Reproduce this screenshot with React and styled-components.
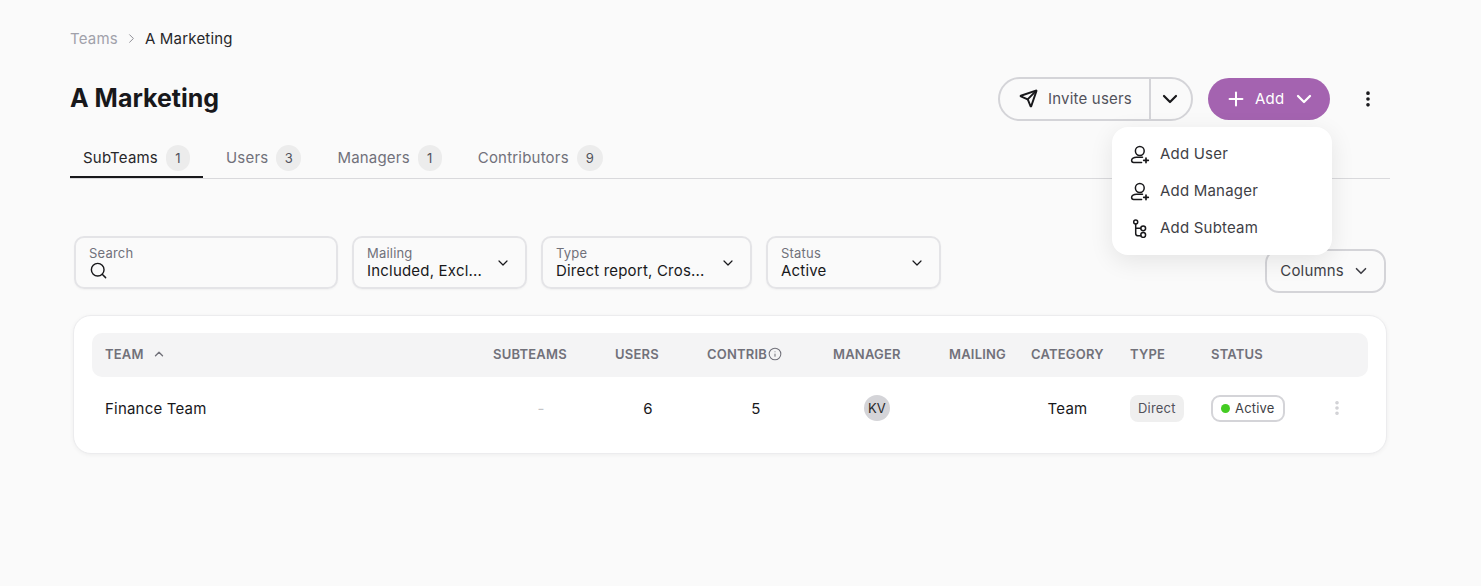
import React from "react";
import styled, { createGlobalStyle } from "styled-components";
import {
  ChevronDown,
  ChevronRight,
  ChevronUp,
  EllipsisVertical,
  Info,
  Plus,
  Search,
  Send,
} from "lucide-react";

const GlobalStyle = createGlobalStyle`
  html, body {
    margin: 0;
    background: #fafafa;
  }
  body {
    font-family: "Inter", "Liberation Sans", sans-serif;
    font-size: 15px;
    letter-spacing: 0.2px;
    color: #18181b;
  }
  * {
    box-sizing: border-box;
  }
`;

const Page = styled.div`
  width: 1481px;
  height: 586px;
  padding: 28px 91px 0 70px;
  overflow: hidden;
`;

const Breadcrumb = styled.nav`
  display: flex;
  align-items: center;
  gap: 6px;
  height: 21px;
  line-height: 21px;
  color: #a1a1aa;
  svg {
    color: #8f8f96;
  }
`;
const Current = styled.span`
  color: #27272a;
`;

const HeaderRow = styled.div`
  display: flex;
  align-items: center;
  justify-content: space-between;
  height: 44px;
  margin-top: 28px;
`;
const Title = styled.h1`
  margin: 0 0 2px;
  font-size: 25px;
  font-weight: 700;
  letter-spacing: 0;
  color: #18181b;
`;
const Actions = styled.div`
  display: flex;
  align-items: center;
`;
const InviteGroup = styled.div`
  display: flex;
  height: 44px;
  width: 195px;
  border: 2px solid #d4d4d8;
  border-radius: 22px;
`;
const InviteMain = styled.div`
  display: flex;
  align-items: center;
  gap: 10px;
  width: 151px;
  padding: 0 0 1px 19px;
  border-right: 2px solid #d4d4d8;
  color: #52525b;
  svg {
    color: #18181b;
  }
`;
const InviteCaret = styled.div`
  flex: 1;
  display: flex;
  align-items: center;
  justify-content: center;
  padding-right: 2px;
`;
const AddWrap = styled.div`
  position: relative;
  margin-left: 15px;
`;
const AddButton = styled.div`
  display: flex;
  align-items: center;
  gap: 8px;
  width: 122px;
  height: 42px;
  padding: 0 0 1px 17px;
  border-radius: 21px;
  background: #a463b0;
  color: #fff;
`;
const Kebab = styled.div`
  display: flex;
  margin-left: 28px;
  margin-right: 12px;
`;

const Menu = styled.div`
  position: absolute;
  top: 49px;
  right: -2px;
  z-index: 5;
  width: 220px;
  height: 128px;
  padding: 8px 18px;
  background: #fff;
  border-radius: 16px;
  box-shadow: 0 6px 24px rgba(0, 0, 0, 0.09);
`;
const MenuItem = styled.div`
  display: flex;
  align-items: center;
  gap: 10px;
  height: 37px;
  color: #3f3f46;
`;

const Tabs = styled.div`
  display: flex;
  gap: 10px;
  height: 42px;
  margin-top: 16px;
  border-bottom: 1px solid #d9d9dc;
`;
const Tab = styled.div`
  display: flex;
  align-items: center;
  gap: 8px;
  height: 41px;
  padding: 0 13px;
  border-bottom: ${(p) => (p.$active ? "2px solid #18181b" : "none")};
  padding-top: ${(p) => (p.$active ? "2px" : "0")};
  color: ${(p) => (p.$active ? "#27272a" : "#71717a")};
`;
const Count = styled.span`
  display: flex;
  align-items: center;
  justify-content: center;
  width: ${(p) => p.$w || 24}px;
  height: 26px;
  border-radius: 13px;
  background: #ececec;
  color: #52525b;
  font-size: 13px;
`;

const FilterRow = styled.div`
  display: flex;
  align-items: flex-start;
  gap: 14px;
  margin-top: 57px;
  padding: 0 4px;
`;
const Field = styled.div`
  display: flex;
  align-items: center;
  justify-content: space-between;
  width: ${(p) => p.$w}px;
  height: 53px;
  padding: 0 14px 0 13px;
  border: 2px solid #e4e4e7;
  border-radius: 10px;
  box-shadow: 0 1px 2px rgba(0, 0, 0, 0.04);
`;
const FieldText = styled.div`
  display: flex;
  flex-direction: column;
`;
const FieldLabel = styled.span`
  font-size: 13px;
  line-height: 16px;
  color: #71717a;
`;
const FieldValue = styled.span`
  display: flex;
  align-items: center;
  height: 19px;
  font-size: 15px;
  color: #18181b;
`;
const ColumnsButton = styled.div`
  display: flex;
  align-items: center;
  gap: 8px;
  height: 44px;
  margin: 13px 0 0 auto;
  padding: 0 14px 1px 13px;
  border: 2px solid #d4d4d8;
  border-radius: 14px;
  color: #3f3f46;
`;

const Card = styled.div`
  height: 139px;
  margin: 22px 3px 0;
  padding: 17px 18px 0;
  background: #fff;
  border: 1px solid #ececee;
  border-radius: 18px;
  box-shadow: 0 1px 4px rgba(0, 0, 0, 0.05);
`;
const columns = "362px 96px 66px 100px 90px 56px 73px 55px 73px 54px";
const HeadRow = styled.div`
  display: grid;
  grid-template-columns: ${columns};
  column-gap: 26px;
  align-items: center;
  height: 44px;
  padding: 0 0 2px 13px;
  background: #f4f4f5;
  border-radius: 10px;
  color: #71717a;
  font-size: 13px;
  font-weight: 600;
`;
const HeadCell = styled.div`
  display: flex;
  align-items: center;
  gap: ${(p) => p.$gap || 0}px;
  white-space: nowrap;
`;
const BodyRow = styled.div`
  display: grid;
  grid-template-columns: ${columns};
  column-gap: 26px;
  align-items: center;
  height: 62px;
  padding-left: 13px;
`;
const Cell = styled.div`
  display: flex;
  justify-content: ${(p) => (p.$center ? "center" : "flex-start")};
  padding-right: ${(p) => p.$pr || 0}px;
  color: ${(p) => p.$color || "#18181b"};
`;
const Avatar = styled.span`
  display: flex;
  align-items: center;
  justify-content: center;
  width: 26px;
  height: 26px;
  border-radius: 50%;
  background: #d4d4d8;
  color: #27272a;
  font-size: 13px;
`;
const TypeTag = styled.span`
  display: flex;
  align-items: center;
  padding: 0 8px;
  height: 27px;
  border-radius: 8px;
  background: #efefef;
  color: #52525b;
  font-size: 13px;
`;
const StatusTag = styled.span`
  display: flex;
  align-items: center;
  gap: 5px;
  height: 27px;
  padding: 0 8px;
  border: 2px solid #d4d4d8;
  border-radius: 9px;
  color: #3f3f46;
  font-size: 13px;
  white-space: nowrap;
`;
const Dot = styled.span`
  width: 9px;
  height: 9px;
  border-radius: 50%;
  background: #44cc22;
`;

function UserPlusIcon() {
  return (
    <svg width="20" height="20" viewBox="0 0 20 20" fill="none" stroke="#18181b" strokeWidth="1.5" strokeLinecap="round">
      <circle cx="9.8" cy="7" r="4.4" />
      <path d="M12.5 13.3H6.5c-2.7 0-4.9 1.4-4.9 3 0 1.2.8 2.1 2 2.1h8" />
      <path d="M16 14v4.6M13.7 16.3h4.6" strokeWidth="1.7" />
    </svg>
  );
}

function SubteamIcon() {
  return (
    <svg width="20" height="20" viewBox="0 0 20 20" fill="none" stroke="#18181b" strokeWidth="1.5" strokeLinecap="round">
      <circle cx="5.7" cy="4" r="2" />
      <path d="M5.7 6v9.4c0 1.7 1 2.4 2.6 2.4h2.6M5.7 10.3h5" />
      <circle cx="13.2" cy="10.3" r="2.4" />
      <circle cx="13.2" cy="17" r="2.4" />
    </svg>
  );
}

const tabs = [
  { label: "SubTeams", count: 1, active: true },
  { label: "Users", count: 3, w: 25 },
  { label: "Managers", count: 1 },
  { label: "Contributors", count: 9, w: 26 },
];

const filters = [
  { label: "Mailing", value: "Included, Excl...", w: 175 },
  { label: "Type", value: "Direct report, Cros...", w: 211 },
  { label: "Status", value: "Active", w: 175 },
];

export default function App() {
  return (
    <Page>
      <GlobalStyle />
      <Breadcrumb>
        Teams
        <ChevronRight size={15} strokeWidth={1.6} />
        <Current>A Marketing</Current>
      </Breadcrumb>

      <HeaderRow>
        <Title>A Marketing</Title>
        <Actions>
          <InviteGroup>
            <InviteMain>
              <Send size={19} strokeWidth={2.4} />
              Invite users
            </InviteMain>
            <InviteCaret>
              <ChevronDown size={24} strokeWidth={2.2} />
            </InviteCaret>
          </InviteGroup>
          <AddWrap>
            <AddButton>
              <Plus size={22} strokeWidth={2.2} />
              <span>Add</span>
              <ChevronDown size={24} strokeWidth={2.3} />
            </AddButton>
            <Menu>
              <MenuItem>
                <UserPlusIcon />
                Add User
              </MenuItem>
              <MenuItem>
                <UserPlusIcon />
                Add Manager
              </MenuItem>
              <MenuItem>
                <SubteamIcon />
                Add Subteam
              </MenuItem>
            </Menu>
          </AddWrap>
          <Kebab>
            <EllipsisVertical size={20} strokeWidth={2.4} />
          </Kebab>
        </Actions>
      </HeaderRow>

      <Tabs>
        {tabs.map((t) => (
          <Tab key={t.label} $active={t.active}>
            {t.label}
            <Count $w={t.w}>{t.count}</Count>
          </Tab>
        ))}
      </Tabs>

      <FilterRow>
        <Field $w={264}>
          <FieldText>
            <FieldLabel>Search</FieldLabel>
            <FieldValue>
              <Search size={19} strokeWidth={1.8} />
            </FieldValue>
          </FieldText>
        </Field>
        {filters.map((f) => (
          <Field key={f.label} $w={f.w}>
            <FieldText>
              <FieldLabel>{f.label}</FieldLabel>
              <FieldValue>{f.value}</FieldValue>
            </FieldText>
            <ChevronDown size={16} strokeWidth={1.8} />
          </Field>
        ))}
        <ColumnsButton>
          Columns
          <ChevronDown size={18} strokeWidth={2.2} />
        </ColumnsButton>
      </FilterRow>

      <Card>
        <HeadRow>
          <HeadCell $gap={8}>
            TEAM
            <ChevronUp size={14} strokeWidth={2.4} />
          </HeadCell>
          <HeadCell>SUBTEAMS</HeadCell>
          <HeadCell>USERS</HeadCell>
          <HeadCell $gap={1}>
            CONTRIB
            <Info size={14} strokeWidth={1.8} />
          </HeadCell>
          <HeadCell>MANAGER</HeadCell>
          <HeadCell>MAILING</HeadCell>
          <HeadCell>CATEGORY</HeadCell>
          <HeadCell>TYPE</HeadCell>
          <HeadCell>STATUS</HeadCell>
          <HeadCell />
        </HeadRow>
        <BodyRow>
          <Cell>Finance Team</Cell>
          <Cell $center $color="#c4c4c8">-</Cell>
          <Cell $center>6</Cell>
          <Cell $center $pr={2}>5</Cell>
          <Cell $center $pr={2}>
            <Avatar>KV</Avatar>
          </Cell>
          <Cell />
          <Cell $center>Team</Cell>
          <Cell>
            <TypeTag>Direct</TypeTag>
          </Cell>
          <Cell>
            <StatusTag>
              <Dot />
              Active
            </StatusTag>
          </Cell>
          <Cell $center $color="#d0d0d4">
            <EllipsisVertical size={18} strokeWidth={2.8} />
          </Cell>
        </BodyRow>
      </Card>
    </Page>
  );
}
